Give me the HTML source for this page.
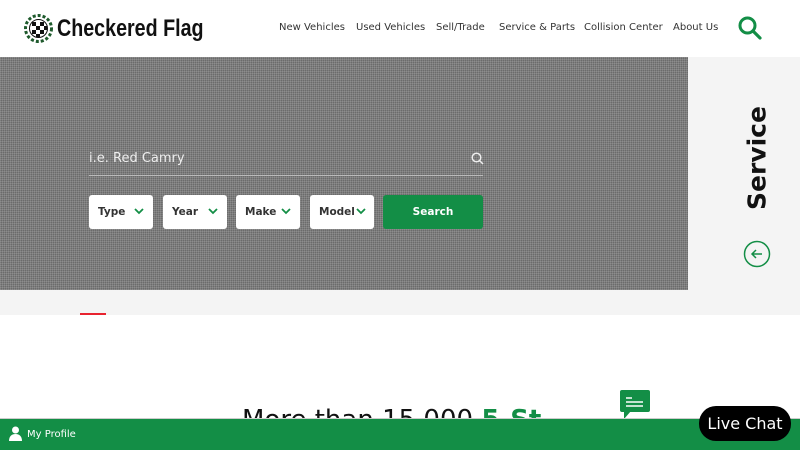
<!DOCTYPE html>
<html><head><meta charset="utf-8"><style>
*{margin:0;padding:0;box-sizing:border-box}
body{width:800px;height:450px;overflow:hidden;background:#fff;font-family:"DejaVu Sans","Liberation Sans",sans-serif;position:relative}
.hdr{position:absolute;left:0;top:0;width:800px;height:57px;background:#fff}
.logo{position:absolute;left:57px;top:15px;font-family:"Liberation Sans",sans-serif;font-size:24px;font-weight:bold;color:#111;transform:scaleX(0.82);transform-origin:left;white-space:nowrap}
.nav{position:absolute;top:22px;font-size:10px;color:#333;white-space:nowrap}
.hero{position:absolute;left:0;top:57px;width:688px;height:233px;background-color:#6b6b6b;background-image:repeating-linear-gradient(0deg,rgba(255,255,255,.12) 0 1px,transparent 1px 2px),repeating-linear-gradient(90deg,rgba(255,255,255,.12) 0 1px,transparent 1px 2px)}
.side{position:absolute;left:688px;top:57px;width:112px;height:233px;background:#f4f4f4}
.strip{position:absolute;left:0;top:290px;width:800px;height:25px;background:#f4f4f4}
.inp{position:absolute;left:89px;top:151px;color:#eee;font-size:13px}
.line{position:absolute;left:89px;top:175px;width:394px;height:1px;background:#bbb}
.sel{position:absolute;top:195px;height:34px;width:64px;background:#fff;border-radius:3px;font-size:10.5px;font-weight:bold;color:#333;padding:11px 0 0 9px}
.sel svg{position:absolute;right:9px;top:13px}
.btn{position:absolute;left:383px;top:195px;width:100px;height:34px;background:#138e46;border-radius:3px;color:#fff;font-size:10.5px;font-weight:bold;text-align:center;line-height:34px}
.bar{position:absolute;left:0;top:418px;width:800px;height:32px;background:#138e46;border-top:1px solid #ccc}
</style></head><body>
<div class="hdr">
<svg style="position:absolute;left:24px;top:14px" width="29" height="29" viewBox="0 0 29 29"><circle cx="14.5" cy="14.5" r="13" fill="none" stroke="#1e5a2c" stroke-width="3" stroke-dasharray="3 2"/><circle cx="14.5" cy="14.5" r="9" fill="#fff" stroke="#111" stroke-width="1"/><g fill="#111"><rect x="8" y="8" width="4" height="4"/><rect x="16" y="8" width="4" height="4"/><rect x="12" y="12" width="4" height="4"/><rect x="20" y="12" width="3" height="4"/><rect x="8" y="16" width="4" height="4"/><rect x="16" y="16" width="4" height="4"/><rect x="12" y="20" width="4" height="3"/></g></svg>
<div class="logo">Checkered Flag</div>
<div class="nav" style="left:279px">New Vehicles</div>
<div class="nav" style="left:356px">Used Vehicles</div>
<div class="nav" style="left:436px">Sell/Trade</div>
<div class="nav" style="left:499px">Service &amp; Parts</div>
<div class="nav" style="left:584px">Collision Center</div>
<div class="nav" style="left:673px">About Us</div>
<svg style="position:absolute;left:737px;top:15px" width="26" height="26" viewBox="0 0 26 26"><circle cx="10.5" cy="10.5" r="7.5" fill="none" stroke="#138e46" stroke-width="3"/><line x1="16" y1="16" x2="23" y2="23" stroke="#138e46" stroke-width="3.2" stroke-linecap="round"/></svg>
</div>
<div class="hero"></div>
<div class="inp">i.e. Red Camry</div>
<svg style="position:absolute;left:471px;top:152px" width="13" height="13" viewBox="0 0 13 13"><circle cx="5.5" cy="5.5" r="4.3" fill="none" stroke="#eee" stroke-width="1.5"/><line x1="8.6" y1="8.6" x2="12" y2="12" stroke="#eee" stroke-width="1.5"/></svg>
<div class="line"></div>
<div class="sel" style="left:89px">Type<svg width="10" height="7" viewBox="0 0 10 7"><path d="M1 1l4 4 4-4" fill="none" stroke="#138e46" stroke-width="1.8"/></svg></div>
<div class="sel" style="left:163px">Year<svg width="10" height="7" viewBox="0 0 10 7"><path d="M1 1l4 4 4-4" fill="none" stroke="#138e46" stroke-width="1.8"/></svg></div>
<div class="sel" style="left:236px">Make<svg width="10" height="7" viewBox="0 0 10 7"><path d="M1 1l4 4 4-4" fill="none" stroke="#138e46" stroke-width="1.8"/></svg></div>
<div class="sel" style="left:310px">Model<svg style="right:8px" width="10" height="7" viewBox="0 0 10 7"><path d="M1 1l4 4 4-4" fill="none" stroke="#138e46" stroke-width="1.8"/></svg></div>
<div class="btn">Search</div>
<div class="side"></div>
<div style="position:absolute;left:757px;top:158px;transform:translate(-50%,-50%) rotate(-90deg);font-size:25px;font-weight:bold;color:#111;white-space:nowrap">Service</div>
<svg style="position:absolute;left:743px;top:240px" width="28" height="28" viewBox="0 0 28 28"><circle cx="14" cy="14" r="12.5" fill="none" stroke="#138e46" stroke-width="1.5"/><path d="M19 14H9M13 10l-4 4 4 4" fill="none" stroke="#138e46" stroke-width="1.5"/></svg>
<div class="strip"></div>
<div style="position:absolute;left:80px;top:313px;width:26px;height:2px;background:#e8232f"></div>
<div style="position:absolute;left:242px;top:405px;font-size:26px;color:#111;white-space:nowrap">More than 15,000 <span style="color:#138e46;font-weight:bold">5-St</span></div>
<svg style="position:absolute;left:620px;top:390px" width="30" height="30" viewBox="0 0 30 30"><rect x="0" y="0" width="30" height="22" rx="2" fill="#138e46"/><path d="M4 21v8l7-8z" fill="#138e46"/><g stroke="#fff" stroke-width="1.5"><line x1="6" y1="8" x2="12" y2="8"/><line x1="6" y1="12" x2="23" y2="12"/><line x1="6" y1="16" x2="23" y2="16"/></g></svg>
<div class="bar">
<svg style="position:absolute;left:9px;top:7px" width="13" height="15" viewBox="0 0 13 15"><circle cx="6.5" cy="4" r="3.5" fill="#fff"/><path d="M0 15c0-5 3-7 6.5-7s6.5 2 6.5 7z" fill="#fff"/></svg>
<div style="position:absolute;left:27px;top:10px;font-size:10px;color:#fff">My Profile</div>
</div>
<div style="position:absolute;left:699px;top:406px;width:92px;height:35px;background:#000;border-radius:17px;color:#fff;font-size:16px;text-align:center;line-height:35px">Live Chat</div>
</body></html>
